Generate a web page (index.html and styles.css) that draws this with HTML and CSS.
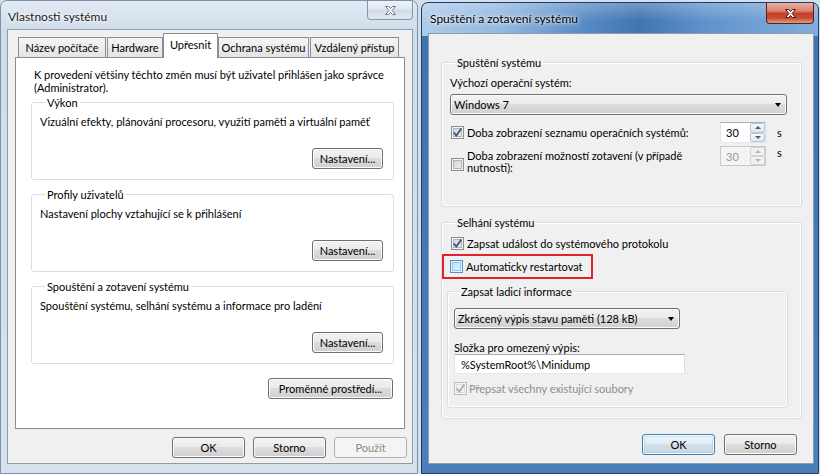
FILE: index.html
```html
<!DOCTYPE html>
<html lang="cs">
<head>
    <meta charset="UTF-8">
    <title>Vlastnosti systému</title>
    <link rel="stylesheet" href="styles.css">
</head>
<body>

<div class="desktop">

    <div class="window inactive">
        <div class="titlebar">
            <span class="title">Vlastnosti systému</span>
            <span class="close">
                <svg width="13" height="11" viewBox="0 0 13 11"><path d="M1.5 1.5h3l2 2 2-2h3l-3.5 4 3.5 4h-3l-2-2-2 2h-3l3.5-4z" fill="#fff" stroke="#6b7686"/></svg>
            </span>
        </div>
        <div class="client">
            <div class="tabs">
                <div class="tab">Název počítače</div>
                <div class="tab">Hardware</div>
                <div class="tab selected">Upřesnit</div>
                <div class="tab">Ochrana systému</div>
                <div class="tab">Vzdálený přístup</div>
            </div>
            <div class="tab-panel">
                <p class="note">K provedení většiny těchto změn musí být uživatel přihlášen jako správce<br>(Administrator).</p>

                <div class="group settings-group">
                    <div class="group-title">Výkon</div>
                    <p class="group-text">Vizuální efekty, plánování procesoru, využití paměti a virtuální paměť</p>
                    <div class="group-actions"><button class="btn small">Nastavení...</button></div>
                </div>

                <div class="group settings-group">
                    <div class="group-title">Profily uživatelů</div>
                    <p class="group-text">Nastavení plochy vztahující se k přihlášení</p>
                    <div class="group-actions"><button class="btn small">Nastavení...</button></div>
                </div>

                <div class="group settings-group">
                    <div class="group-title">Spouštění a zotavení systému</div>
                    <p class="group-text">Spouštění systému, selhání systému a informace pro ladění</p>
                    <div class="group-actions"><button class="btn small">Nastavení...</button></div>
                </div>

                <div class="panel-actions"><button class="btn wide">Proměnné prostředí...</button></div>
            </div>
            <div class="dialog-buttons">
                <button class="btn">OK</button>
                <button class="btn">Storno</button>
                <button class="btn" disabled>Použít</button>
            </div>
        </div>
    </div>

    <div class="window active">
        <div class="titlebar">
            <span class="title">Spuštění a zotavení systému</span>
            <span class="close">
                <svg width="13" height="11" viewBox="0 0 13 11"><path d="M1.5 1.5h3l2 2 2-2h3l-3.5 4 3.5 4h-3l-2-2-2 2h-3l3.5-4z" fill="#fff" stroke="#4a1810"/></svg>
            </span>
        </div>
        <div class="client startup-client">

            <div class="group boot-group">
                <div class="group-title">Spuštění systému</div>
                <p class="field-label">Výchozí operační systém:</p>
                <div class="combo">Windows 7</div>

                <div class="check-row timeout-row">
                    <span class="checkbox"><svg viewBox="0 0 11 11" width="11" height="11"><path d="M1.8 5.4 4.3 8.6 9.4 1.4" fill="none" stroke="#3b4f80" stroke-width="1.7"/></svg></span>
                    <span class="check-label">Doba zobrazení seznamu operačních systémů:</span>
                    <span class="spin">
                        <span class="spin-value">30</span>
                        <span class="spin-buttons"><span class="spin-up"></span><span class="spin-down"></span></span>
                    </span>
                    <span class="unit">s</span>
                </div>

                <div class="check-row timeout-row wrap-row">
                    <span class="checkbox"></span>
                    <span class="check-label">Doba zobrazení možností zotavení (v případě<br>nutnosti):</span>
                    <span class="spin disabled">
                        <span class="spin-value">30</span>
                        <span class="spin-buttons"><span class="spin-up"></span><span class="spin-down"></span></span>
                    </span>
                    <span class="unit">s</span>
                </div>
            </div>

            <div class="group failure-group">
                <div class="group-title">Selhání systému</div>

                <div class="check-row event-row">
                    <span class="checkbox"><svg viewBox="0 0 11 11" width="11" height="11"><path d="M1.8 5.4 4.3 8.6 9.4 1.4" fill="none" stroke="#3b4f80" stroke-width="1.7"/></svg></span>
                    <span class="check-label">Zapsat událost do systémového protokolu</span>
                </div>

                <div class="check-row highlight">
                    <span class="checkbox hot"></span>
                    <span class="check-label">Automaticky restartovat</span>
                </div>

                <div class="group debug-group">
                    <div class="group-title">Zapsat ladicí informace</div>
                    <div class="combo short">Zkrácený výpis stavu paměti (128 kB)</div>
                    <p class="field-label dump-label">Složka pro omezený výpis:</p>
                    <div class="text-input">%SystemRoot%\Minidump</div>
                    <div class="check-row overwrite-row">
                        <span class="checkbox disabled"><svg viewBox="0 0 11 11" width="11" height="11"><path d="M1.8 5.4 4.3 8.6 9.4 1.4" fill="none" stroke="#a9a9a9" stroke-width="1.7"/></svg></span>
                        <span class="check-label muted">Přepsat všechny existující soubory</span>
                    </div>
                </div>
            </div>

            <div class="dialog-buttons">
                <button class="btn default">OK</button>
                <button class="btn">Storno</button>
            </div>
        </div>
    </div>

</div>

</body>
</html>
```

FILE: styles.css
```css
* {
    box-sizing: border-box;
}

body {
    margin: 0;
    width: 820px;
    height: 474px;
    overflow: hidden;
    background: #d3dfec;
    font-family: Lato, "Liberation Sans", sans-serif;
    font-size: 11px;
    line-height: 13px;
    color: #000;
}

p {
    margin: 0;
}

.desktop {
    display: flex;
    align-items: flex-start;
}

/* window frames */

.window {
    display: flex;
    flex-direction: column;
    border: 1px solid #7d91a9;
    border-radius: 7px 7px 0 0;
    padding: 0 4px 9px 6px;
}

.window.inactive {
    width: 418px;
    height: 474px;
    background: linear-gradient(#e2eaf4, #cfdcea 30px, #d6e2ee);
}

.window.active {
    width: 398px;
    height: 472px;
    margin: 2px 0 0 3px;
    border-color: #1d3c66;
    background:
        linear-gradient(rgba(255, 255, 255, 0.25), rgba(255, 255, 255, 0) 18px) top / 100% 33px no-repeat,
        linear-gradient(90deg, #aecbea 0%, #93b8e0 20%, #5a8dc6 40%, #4175b1 55%, #6194cd 72%, #83addb 100%) top / 100% 33px no-repeat,
        linear-gradient(#3f72ae, #4a7fbb);
}

.titlebar {
    display: flex;
    justify-content: space-between;
    align-items: flex-start;
    height: 28px;
}

.active .titlebar {
    height: 30px;
}

.title {
    margin: 9px 0 0 1px;
    font-size: 12px;
    color: #1b1b1b;
    text-shadow: 0 0 6px #fff, 0 0 3px #fff;
}

.active .title {
    margin-left: 2px;
    color: #000;
}

.close {
    display: flex;
    align-items: center;
    justify-content: center;
    width: 46px;
    height: 19px;
    border: 1px solid #8595aa;
    border-top: none;
    border-radius: 0 0 4px 4px;
    background: linear-gradient(#eef3f8, #dfe7f0 45%, #d0dce9 50%, #e0e9f2);
}

.active .close {
    width: 48px;
    height: 21px;
    border-color: #5a1e16;
    background: linear-gradient(#e9b1a2, #d9826b 40%, #c3402a 52%, #c64c33 75%, #e29c83);
}

.client {
    flex: 1;
    display: flex;
    flex-direction: column;
    background: #f0f0f0;
    border: 1px solid #8d9db1;
}

/* tabs */

.tabs {
    display: flex;
    align-items: flex-end;
    height: 27px;
    padding: 3px 0 0 10px;
}

.tab {
    flex: none;
    display: flex;
    align-items: center;
    justify-content: center;
    height: 20px;
    padding-bottom: 1px;
    border: 1px solid #898c95;
    border-bottom: none;
    background: linear-gradient(#f5f5f5, #e4e4e4);
    white-space: nowrap;
}

.tab:nth-child(1) { width: 88px; }
.tab:nth-child(2) { width: 56px; }
.tab:nth-child(3) { width: 55px; }
.tab:nth-child(4) { width: 91px; }
.tab:nth-child(5) { width: 89px; }

.tab + .tab {
    margin-left: 1px;
}

.tab.selected {
    position: relative;
    z-index: 1;
    align-items: flex-start;
    height: 25px;
    margin-bottom: -1px;
    padding: 4px 0 0;
    background: #fff;
}

.tab.selected,
.tab.selected + .tab {
    margin-left: 0;
}

.tab-panel {
    height: 372px;
    margin: 0 7px;
    padding: 10px 10px 0 15px;
    background: #fff;
    border: 1px solid #898c95;
}

.note {
    padding-left: 3px;
    white-space: nowrap;
}

/* group boxes */

.group {
    background: inherit;
    border: 1px solid #d5dfe5;
    border-radius: 3px;
    box-shadow: inset 0 0 0 1px #fff;
}

.group-title {
    display: table;
    margin: -7px 0 0 5px;
    padding: 0 2px;
    background: inherit;
    white-space: nowrap;
}

.settings-group {
    margin-top: 14px;
    padding: 0 10px 10px 8px;
}

.note + .settings-group {
    margin-top: 8px;
}

.group-text {
    margin-top: 6px;
    white-space: nowrap;
}

.group-actions,
.panel-actions {
    display: flex;
    justify-content: flex-end;
}

.group-actions {
    margin-top: 20px;
}

.panel-actions {
    margin: 14px 1px 0 0;
}

/* buttons */

.btn {
    width: 73px;
    height: 21px;
    padding: 0;
    font: inherit;
    color: #000;
    border: 1px solid #707070;
    border-radius: 3px;
    background: linear-gradient(#f2f2f2, #ebebeb 45%, #dddddd 50%, #cfcfcf);
    box-shadow: inset 0 0 0 1px #fbfbfb;
}

.btn.small {
    width: 71px;
}

.btn.wide {
    width: 125px;
}

.btn.default {
    border-color: #3c7fb1;
    background: linear-gradient(#eef5fa, #e3edf4 45%, #d3e0ea 50%, #c7d6e2);
    box-shadow: inset 0 0 0 1px #f6fbfe, inset 0 0 0 2px rgba(120, 200, 240, 0.35);
}

.btn:disabled {
    color: #8a8a8a;
    border-color: #adb2b5;
    background: #f4f4f4;
    box-shadow: none;
}

.dialog-buttons {
    display: flex;
    justify-content: flex-end;
    gap: 8px;
    padding: 8px 5px 0 0;
}

/* startup and recovery dialog */

.startup-client {
    padding: 28px 11px 0 12px;
}

.boot-group {
    padding: 0 14px 32px 8px;
}

.field-label {
    margin-top: 7px;
}

.combo {
    display: flex;
    align-items: center;
    justify-content: space-between;
    height: 21px;
    margin-top: 5px;
    padding: 0 5px 0 3px;
    border: 1px solid #707070;
    border-radius: 3px;
    background: linear-gradient(#f2f2f2, #ebebeb 45%, #dddddd 50%, #cfcfcf);
    box-shadow: inset 0 0 0 1px #fbfbfb;
}

.combo::after {
    content: "";
    border-left: 3.5px solid transparent;
    border-right: 3.5px solid transparent;
    border-top: 4px solid #000;
}

.check-row {
    display: flex;
    align-items: center;
    gap: 3px;
    white-space: nowrap;
}

.timeout-row {
    margin-top: 7px;
    padding-left: 1px;
}

.check-label {
    flex: none;
}

.timeout-row .check-label {
    flex: 1;
}

.wrap-row {
    align-items: flex-start;
    margin-top: 3px;
}

.wrap-row .checkbox {
    margin-top: 12px;
}

.wrap-row .check-label {
    margin-top: 4px;
    line-height: 12px;
}

.checkbox {
    flex: none;
    display: flex;
    align-items: center;
    justify-content: center;
    width: 13px;
    height: 13px;
    border: 1px solid #8e8f8f;
    background: linear-gradient(135deg, #cbcfd5, #f6f6f6);
    box-shadow: inset 0 0 0 1px #f4f4f4, inset 0 0 0 2px #aeb3b9;
}

.checkbox.hot {
    border-color: #5b8fbf;
    background: linear-gradient(135deg, #b1dffd, #e9f7fe);
    box-shadow: inset 0 0 0 1px #e3f3fd, inset 0 0 0 2px #8ccaf3;
}

.checkbox.disabled {
    border-color: #bcbcbc;
    background: #f4f4f4;
    box-shadow: inset 0 0 0 1px #f4f4f4, inset 0 0 0 2px #dcdcdc;
}

.spin {
    flex: none;
    display: flex;
    width: 46px;
    height: 21px;
    background: #fff;
    border: 1px solid;
    border-color: #abadb3 #dbdfe6 #e3e9ef #e2e3ea;
}

.wrap-row .spin {
    height: 20px;
}

.spin-value {
    flex: 1;
    padding: 3px 0 0 5px;
}

.spin-buttons {
    display: flex;
    flex-direction: column;
    width: 15px;
}

.spin-up,
.spin-down {
    flex: 1;
    display: flex;
    align-items: center;
    justify-content: center;
    border: 1px solid #b9c5d1;
    border-radius: 2px;
    background: linear-gradient(#f6f9fb, #dee6ee);
}

.spin-up::after,
.spin-down::after {
    content: "";
    border-left: 3px solid transparent;
    border-right: 3px solid transparent;
}

.spin-up::after {
    border-bottom: 3px solid #4d5d75;
}

.spin-down::after {
    border-top: 3px solid #4d5d75;
}

.spin.disabled {
    color: #9a9a9a;
    background: #f4f4f4;
    border-color: #c9c9c9;
}

.spin.disabled .spin-up,
.spin.disabled .spin-down {
    border-color: #d3d3d3;
    background: #f2f2f2;
}

.spin.disabled .spin-up::after {
    border-bottom-color: #b5b5b5;
}

.spin.disabled .spin-down::after {
    border-top-color: #b5b5b5;
}

.unit {
    flex: none;
    width: 18px;
    padding-left: 8px;
}

.failure-group {
    margin-top: 15px;
    padding: 0 13px 10px 8px;
}

.event-row {
    margin-top: 8px;
    padding-left: 1px;
}

.highlight {
    width: fit-content;
    margin: 4px 0 0 -8px;
    padding: 4px 8px 4px 6px;
    border: 2px solid #e3202c;
}

.debug-group {
    margin: 12px 0 0 -3px;
    padding: 0 8px 12px 6px;
}

.combo.short {
    width: 226px;
    margin-top: 10px;
}

.dump-label {
    margin-top: 12px;
}

.text-input {
    width: 231px;
    height: 20px;
    padding: 3px 0 0 6px;
    background: #fff;
    border: 1px solid;
    border-color: #abadb3 #dbdfe6 #e3e9ef #e2e3ea;
}

.overwrite-row {
    margin-top: 8px;
    gap: 2px;
}

.muted {
    color: #8d8d8d;
}

.startup-client .dialog-buttons {
    gap: 9px;
    padding: 15px 5px 0 0;
}
```
